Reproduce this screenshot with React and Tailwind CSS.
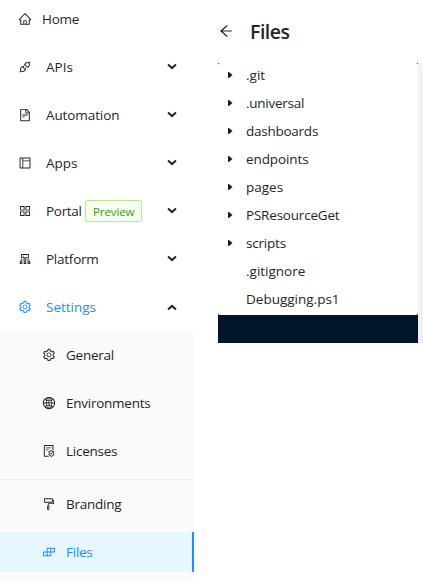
import {
  AiOutlineHome, AiOutlineApi, AiOutlineFileText, AiOutlineLayout, AiOutlineAppstore,
  AiOutlineCluster, AiOutlineSetting, AiOutlineGlobal, AiOutlineFileProtect,
  AiOutlineFormatPainter, AiOutlineBuild, AiOutlineArrowLeft,
} from "react-icons/ai";

const menu = [
  { label: "APIs", icon: AiOutlineApi, spacing: "tracking-[0px]" },
  { label: "Automation", icon: AiOutlineFileText, spacing: "tracking-[-0.1px]" },
  { label: "Apps", icon: AiOutlineLayout, spacing: "tracking-[0px]" },
  { label: "Portal", icon: AiOutlineAppstore, tag: "Preview", spacing: "tracking-[-0.3px]" },
  { label: "Platform", icon: AiOutlineCluster, spacing: "tracking-[-0.25px]" },
  { label: "Settings", icon: AiOutlineSetting, open: true, spacing: "tracking-[0px]" },
];

const files = [
  { name: ".git", folder: true, spacing: "tracking-[0px]" },
  { name: ".universal", folder: true, spacing: "tracking-[-0.25px]" },
  { name: "dashboards", folder: true, spacing: "tracking-[-0.25px]" },
  { name: "endpoints", folder: true, spacing: "tracking-[-0.1px]" },
  { name: "pages", folder: true, spacing: "tracking-[0px]" },
  { name: "PSResourceGet", folder: true, spacing: "tracking-[-0.2px]" },
  { name: "scripts", folder: true, spacing: "tracking-[-0.2px]" },
  { name: ".gitignore", spacing: "tracking-[0px]" },
  { name: "Debugging.ps1", spacing: "tracking-[0px]" },
];

function Chevron({ open }) {
  return (
    <svg width="10" height="7" viewBox="0 0 10 7" fill="none" stroke="#262626" strokeWidth="2.1" className={`block shrink-0 ${open ? "mt-px" : "mb-0.5"}`}>
      <path d={open ? "M1 5.5 5 2 9 5.5" : "M1 1.5 5 5 9 1.5"} />
    </svg>
  );
}

function MenuRow({ item }) {
  const Icon = item.icon;
  return (
    <div className={`flex h-10 items-center pr-[17px] pl-[18px] ${item.open ? "text-[#1890ff]" : ""}`}>
      <Icon size={14} className="shrink-0" />
      <span className={`ml-3.5 ${item.spacing}`}>{item.label}</span>
      {item.tag && (
        <span className="ml-[3.5px] flex h-[22px] w-[57px] items-center justify-center rounded-xs border border-[#b7eb8f] bg-[#f6ffed] pt-0.5 text-[11.5px] tracking-[-0.1px] text-[#389e0d]">
          {item.tag}
        </span>
      )}
      <span className="ml-auto"><Chevron open={item.open} /></span>
    </div>
  );
}

function SubRow({ label, icon: Icon, active }) {
  return (
    <div className={`flex h-10 items-center pl-[42px] ${active ? "border-r-2 border-[#1890ff] bg-[#e6f7ff] text-[#1890ff]" : ""}`}>
      <Icon size={14} className="shrink-0" />
      <span className="ml-2.5 tracking-[-0.25px]">{label}</span>
    </div>
  );
}

export default function App() {
  return (
    <div className="flex h-[580px] w-[423px] overflow-hidden bg-white font-['Open_Sans','Noto_Sans',sans-serif] text-[13.5px] leading-5 text-[#262626]">
      <nav className="flex w-[194px] shrink-0 flex-col">
        <div className="flex h-[39px] shrink-0 items-center pb-px pl-[18px]">
          <AiOutlineHome size={14} />
          <span className="ml-2.5 tracking-[-0.25px]">Home</span>
        </div>
        <div className="flex flex-col gap-2 pt-2 pb-1">
          {menu.map((item) => <MenuRow key={item.label} item={item} />)}
        </div>
        <div className="flex grow flex-col bg-[#fafafa] pt-1">
          <div className="flex flex-col gap-2 pb-2">
            <SubRow label="General" icon={AiOutlineSetting} />
            <SubRow label="Environments" icon={AiOutlineGlobal} />
            <SubRow label="Licenses" icon={AiOutlineFileProtect} />
          </div>
          <div className="h-px bg-[#f0f0f0]" />
          <div className="flex flex-col gap-2 pt-1">
            <SubRow label="Branding" icon={AiOutlineFormatPainter} />
            <SubRow label="Files" icon={AiOutlineBuild} active />
          </div>
        </div>
      </nav>
      <main className="ml-6 w-[205px]">
        <header className="flex h-[63px] items-center">
          <AiOutlineArrowLeft size={16} className="mb-0.5" />
          <h1 className="ml-4 pt-px text-[19.5px] font-semibold tracking-[-0.5px]">Files</h1>
        </header>
        <div className="flex h-[280px] bg-[#f0f2f5]">
          <div className="w-[200px] bg-[#001529]">
            <ul className="flex h-[252px] flex-col rounded-xs bg-white">
              {files.map((file) => (
                <li key={file.name} className="flex h-7 items-center pb-1 pl-[10px]">
                  <svg width="5" height="6" viewBox="0 0 5 6" fill="#1f1f1f" className={file.folder ? "" : "invisible"}>
                    <path d="M0 0H1L4.5 3 1 6H0Z" />
                  </svg>
                  <span className={`ml-[13px] ${file.spacing}`}>{file.name}</span>
                </li>
              ))}
            </ul>
          </div>
        </div>
      </main>
    </div>
  );
}
